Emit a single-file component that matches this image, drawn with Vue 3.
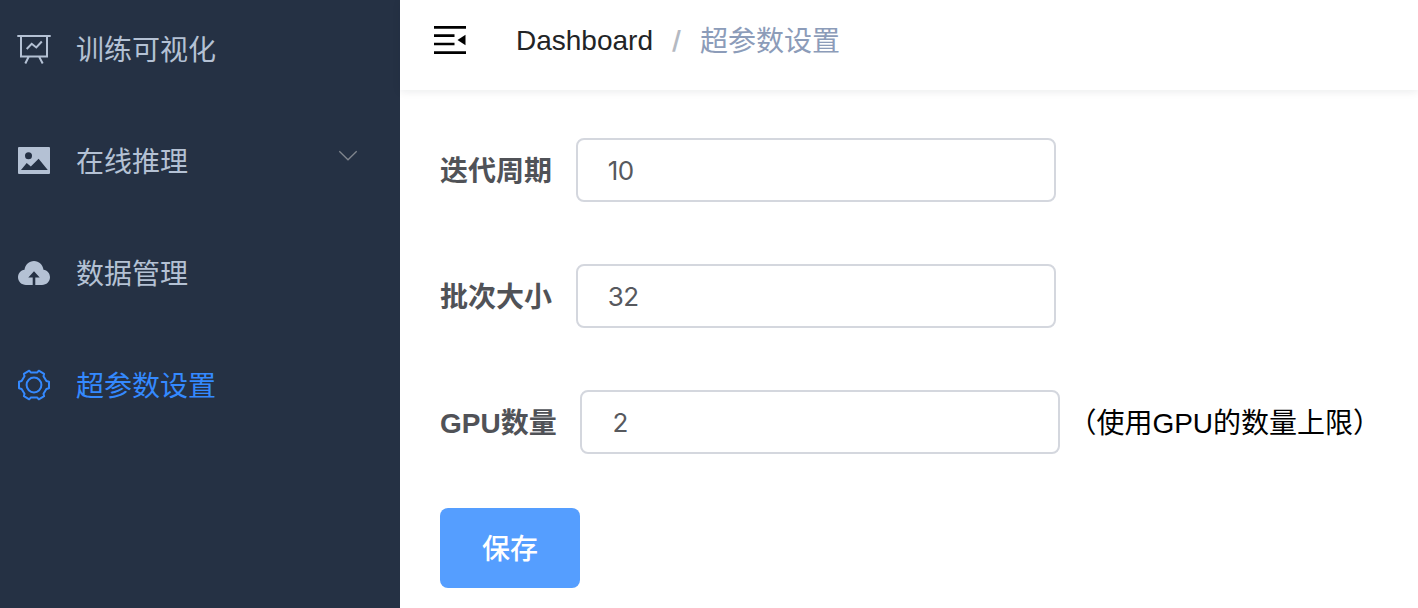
<script setup>
import { ref } from 'vue'

const menu = [
  { icon: 'board', title: '训练可视化' },
  { icon: 'picture', title: '在线推理', expandable: true },
  { icon: 'upload', title: '数据管理' },
  { icon: 'setting', title: '超参数设置', active: true },
]

const fields = ref([
  { label: '迭代周期', value: '10' },
  { label: '批次大小', value: '32' },
  { label: 'GPU数量', value: '2', hint: '（使用GPU的数量上限）' },
])
</script>

<template>
  <div class="layout">
    <nav class="sidebar">
      <div v-for="item in menu" :key="item.title" class="menu-item" :class="{ active: item.active }">
        <svg class="menu-icon" viewBox="0 0 36 36" width="36" height="36" fill="none" stroke="currentColor" stroke-width="2">
          <g v-if="item.icon === 'board'">
            <path d="M1.3 6H34.7M5 6V26.5H31V6M12.8 26.5L9.3 33.5M23 26.5L26.7 33.5" />
            <path d="M10.7 19L15.7 13.8L20.3 17.5L25.8 11.5" />
          </g>
          <g v-else-if="item.icon === 'picture'" stroke="none">
            <path fill="currentColor" fill-rule="evenodd" d="M3 5H33Q34 5 34 6V31Q34 32 33 32H3Q2 32 2 31V6Q2 5 3 5ZM12.5 10.2A3.5 3.5 0 1 0 12.5 17.2A3.5 3.5 0 1 0 12.5 10.2ZM5 28H31.8L22.6 16.8L14.8 24.6L10.7 21Z" />
          </g>
          <g v-else-if="item.icon === 'upload'" stroke="none">
            <path fill="currentColor" d="M16.7 31H10C5.5 31 2 27.6 2 23.3C2 19.4 4.8 16.2 8.5 15.7C9.2 10.8 13 7 18 7S26.8 10.8 27.5 15.7C31.2 16.2 34 19.4 34 23.3C34 27.6 30.5 31 26 31H19.3V23.5H23.7L18 17.2L12.3 23.5H16.7Z" />
          </g>
          <g v-else>
            <path stroke-linejoin="round" d="M13.2 4.7L14.7 6.4H21.3L22.8 4.7L28.1 7.8L27.5 10.2L30.4 15L33 15.8V22.2L30.4 23L27.5 27.8L28.1 30.2L22.8 33.3L21.3 31.6H14.7L13.2 33.3L7.9 30.2L8.5 27.8L5.6 23L3 22.2V15.8L5.6 15L8.5 10.2L7.9 7.8Z" />
            <circle cx="18" cy="19" r="7.4" />
          </g>
        </svg>
        <span>{{ item.title }}</span>
        <svg v-if="item.expandable" class="arrow" viewBox="0 0 20 12" width="20" height="12">
          <path d="M1.3 1.3L10 9.8L18.7 1.3" fill="none" stroke="#80868e" stroke-width="1.3" />
        </svg>
      </div>
    </nav>
    <div class="main">
      <header class="navbar">
        <svg class="fold" viewBox="0 0 32 28" width="32" height="28">
          <path d="M0 1.4H32M0 9.6H20.5M0 18H20.5M0 26.6H32" stroke="#000" stroke-width="2.6" />
          <path d="M31.5 8.8V19.2L23.5 14Z" />
        </svg>
        <span class="crumb">Dashboard</span>
        <span class="separator">/</span>
        <span class="current">超参数设置</span>
      </header>
      <form class="form" @submit.prevent>
        <div v-for="field in fields" :key="field.label" class="row">
          <label>{{ field.label }}</label>
          <input v-model="field.value" type="text" :aria-label="field.label" />
          <span v-if="field.hint" class="hint">{{ field.hint }}</span>
        </div>
        <button type="submit">保存</button>
      </form>
    </div>
  </div>
</template>

<style>
body {
  overflow: hidden;
}
</style>

<style scoped>
.layout {
  display: flex;
  height: 608px;
  overflow: hidden;
  background: #fff;
  font: 28px/40px "Liberation Sans", "Noto Sans CJK SC", sans-serif;
}
.sidebar {
  flex: none;
  width: 400px;
  background: #253144;
}
.menu-item {
  display: flex;
  align-items: center;
  height: 112px;
  padding: 0 42px 0 16px;
  color: #b4c1d4;
}
.menu-item:first-child {
  margin-top: -8px;
}
.menu-item span {
  padding-top: 5px;
}
.menu-icon {
  flex: none;
  margin-right: 24px;
}
.active {
  color: #3489ff;
}
.arrow {
  margin-left: auto;
  margin-bottom: 9px;
}
.main {
  flex: 1;
  min-width: 0;
}
.navbar {
  display: flex;
  align-items: center;
  height: 90px;
  box-sizing: border-box;
  padding: 0 34px 10px;
  box-shadow: 0 2px 8px rgba(0, 21, 41, 0.08);
}
.fold {
  margin-right: 50px;
}
.crumb {
  padding-top: 2px;
  color: #222426;
}
.separator {
  width: 11px;
  margin: 0 18px;
  color: #b4b9c2;
  font: 600 25px/40px Inter, sans-serif;
  text-align: center;
}
.current {
  padding-top: 3px;
  color: #8c9cb9;
}
.form {
  padding: 48px 40px 0;
}
.row {
  display: flex;
  align-items: center;
  height: 64px;
  margin-bottom: 62px;
  white-space: nowrap;
}
label {
  flex: none;
  padding-top: 3px;
  margin-right: 23.7px;
  color: #505257;
  font-weight: 700;
}
input {
  flex: none;
  width: 480px;
  height: 64px;
  box-sizing: border-box;
  padding: 1px 30px 0;
  border: 2px solid #d4d7de;
  border-radius: 8px;
  outline: none;
  background: #fff;
  color: #57595e;
  font: 26px Inter, sans-serif;
  letter-spacing: -0.5px;
}
.hint {
  padding-top: 3px;
  margin-left: 8px;
  color: #000;
}
button {
  display: block;
  width: 140px;
  height: 80px;
  margin-top: -8px;
  padding: 0 0 2px;
  border: 0;
  border-radius: 8px;
  background: #559eff;
  color: #fff;
  font: 500 28px "Liberation Sans", "Noto Sans CJK SC", sans-serif;
}
</style>
